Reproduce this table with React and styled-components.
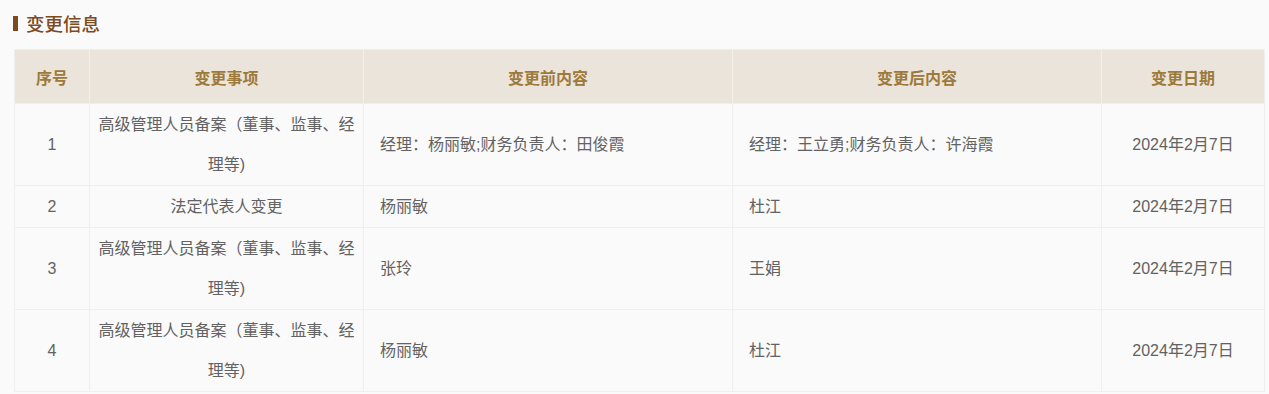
import React from "react";
import styled, { createGlobalStyle } from "styled-components";

const Global = createGlobalStyle`
  html, body { margin: 0; padding: 0; background: #fafafa; }
  body { font-family: "Liberation Sans", "Noto Sans CJK SC", sans-serif; }
`;

const Page = styled.div`
  padding: 8px 5px 0 14px;
`;

const Title = styled.h2`
  display: flex;
  align-items: center;
  gap: 8px;
  margin: 0 0 11px -1px;
  height: 30px;
  font-family: "Noto Sans CJK SC", sans-serif;
  font-size: 18.5px;
  font-weight: 500;
  color: #7b4a1e;
  &::before {
    content: "";
    display: block;
    width: 5px;
    height: 15px;
    background: #7b4a1e;
  }
`;

const Table = styled.table`
  width: 1250px;
  table-layout: fixed;
  border-collapse: collapse;
  border: 1px solid #efefef;
  font-size: 16px;
`;

const HeadCell = styled.th`
  height: 53px;
  padding: 0 8px;
  background: #ebe4da;
  color: #9d7a3b;
  font-weight: 700;
  text-align: center;
  border-left: 1px solid #f3efe9;
  &:first-child { border-left: none; }
`;

const Row = styled.tr`
  border-top: 1px solid #efefef;
`;

const Cell = styled.td`
  padding: 1px ${(p) => (p.$align === "left" ? "16px" : "8px")} 0;
  line-height: 40px;
  color: #626262;
  text-align: ${(p) => p.$align || "center"};
  border-left: 1px solid #efefef;
  vertical-align: middle;
  word-break: break-all;
  &:first-child { border-left: none; }
`;

const columns = [
  { title: "序号", width: 75 },
  { title: "变更事项", width: 274 },
  { title: "变更前内容", width: 369 },
  { title: "变更后内容", width: 369 },
  { title: "变更日期", width: 163 },
];

const rows = [
  ["1", "高级管理人员备案（董事、监事、经理等)", "经理：杨丽敏;财务负责人：田俊霞", "经理：王立勇;财务负责人：许海霞", "2024年2月7日"],
  ["2", "法定代表人变更", "杨丽敏", "杜江", "2024年2月7日"],
  ["3", "高级管理人员备案（董事、监事、经理等)", "张玲", "王娟", "2024年2月7日"],
  ["4", "高级管理人员备案（董事、监事、经理等)", "杨丽敏", "杜江", "2024年2月7日"],
];

export default function App() {
  return (
    <Page>
      <Global />
      <Title>变更信息</Title>
      <Table>
        <colgroup>
          {columns.map((c) => (
            <col key={c.title} style={{ width: c.width }} />
          ))}
        </colgroup>
        <thead>
          <tr>
            {columns.map((c) => (
              <HeadCell key={c.title}>{c.title}</HeadCell>
            ))}
          </tr>
        </thead>
        <tbody>
          {rows.map((r) => (
            <Row key={r[0]}>
              <Cell>{r[0]}</Cell>
              <Cell>{r[1]}</Cell>
              <Cell $align="left">{r[2]}</Cell>
              <Cell $align="left">{r[3]}</Cell>
              <Cell>{r[4]}</Cell>
            </Row>
          ))}
        </tbody>
      </Table>
    </Page>
  );
}
